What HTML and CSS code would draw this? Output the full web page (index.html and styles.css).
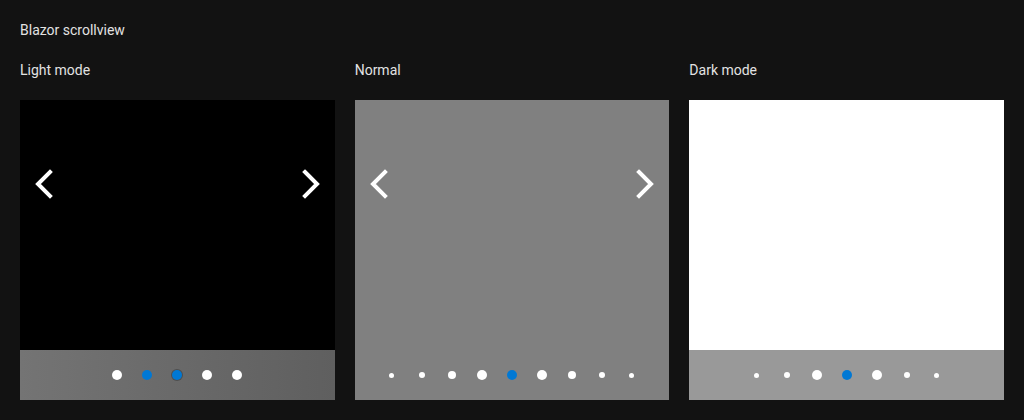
FILE: index.html
```html
<!DOCTYPE html>
<html>
<head>
<meta charset="utf-8">
<link rel="stylesheet" href="styles.css">
</head>
<body>
<div class="page">
  <div class="title">Blazor scrollview</div>
  <div class="columns">
    <section class="col">
      <div class="label">Light mode</div>
      <div class="view view-light">
        <div class="content">
          <svg class="arrow arrow-left" viewBox="0 0 20 32" width="20" height="32"><path d="M16 4 L4 16 L16 28"/></svg>
          <svg class="arrow arrow-right" viewBox="0 0 20 32" width="20" height="32"><path d="M4 4 L16 16 L4 28"/></svg>
        </div>
        <div class="footer">
          <span class="cell"><i class="dot d10"></i></span>
          <span class="cell"><i class="dot d10 blue"></i></span>
          <span class="cell"><i class="dot d10 blue ring"></i></span>
          <span class="cell"><i class="dot d10"></i></span>
          <span class="cell"><i class="dot d10"></i></span>
        </div>
      </div>
    </section>
    <section class="col">
      <div class="label">Normal</div>
      <div class="view view-normal">
        <div class="content">
          <svg class="arrow arrow-left" viewBox="0 0 20 32" width="20" height="32"><path d="M16 4 L4 16 L16 28"/></svg>
          <svg class="arrow arrow-right" viewBox="0 0 20 32" width="20" height="32"><path d="M4 4 L16 16 L4 28"/></svg>
        </div>
        <div class="footer">
          <span class="cell"><i class="dot d5"></i></span>
          <span class="cell"><i class="dot d6"></i></span>
          <span class="cell"><i class="dot d8"></i></span>
          <span class="cell"><i class="dot d10"></i></span>
          <span class="cell"><i class="dot d10 blue"></i></span>
          <span class="cell"><i class="dot d10"></i></span>
          <span class="cell"><i class="dot d8"></i></span>
          <span class="cell"><i class="dot d6"></i></span>
          <span class="cell"><i class="dot d5"></i></span>
        </div>
      </div>
    </section>
    <section class="col">
      <div class="label">Dark mode</div>
      <div class="view view-dark">
        <div class="content"></div>
        <div class="footer">
          <span class="cell"><i class="dot d5"></i></span>
          <span class="cell"><i class="dot d6"></i></span>
          <span class="cell"><i class="dot d10"></i></span>
          <span class="cell"><i class="dot d10 blue"></i></span>
          <span class="cell"><i class="dot d10"></i></span>
          <span class="cell"><i class="dot d6"></i></span>
          <span class="cell"><i class="dot d5"></i></span>
        </div>
      </div>
    </section>
  </div>
</div>
</body>
</html>
```
FILE: styles.css
```css
html, body {
  margin: 0;
  padding: 0;
  background: #121212;
}
body {
  font-family: Roboto, "Liberation Sans", sans-serif;
  font-size: 14px;
  color: #e2e2e2;
}
.page {
  padding: 20px;
}
.title {
  line-height: 20px;
  height: 20px;
  margin-bottom: 20px;
}
.columns {
  display: grid;
  grid-template-columns: 1fr 1fr 1fr;
  column-gap: 20px;
}
.label {
  line-height: 20px;
  height: 20px;
  margin-bottom: 20px;
}
.view {
  height: 300px;
  display: flex;
  flex-direction: column;
}
.content {
  position: relative;
  height: 250px;
}
.footer {
  height: 50px;
  display: flex;
  justify-content: center;
  align-items: center;
}
.view-light .content { background: #000; }
.view-light .footer { background: linear-gradient(to right, #747474, #5f5f5f); }
.view-normal .content { background: #808080; }
.view-normal .footer { background: #808080; }
.view-dark .content { background: #ffffff; }
.view-dark .footer { background: #999999; }
.arrow {
  position: absolute;
  top: 68px;
  fill: none;
  stroke: #ffffff;
  stroke-width: 4;
  stroke-linecap: square;
  stroke-linejoin: miter;
}
.arrow-left { left: 14px; }
.arrow-right { right: 14px; }
.cell {
  width: 30px;
  height: 10px;
  display: flex;
  justify-content: center;
  align-items: center;
}
.dot {
  display: block;
  border-radius: 50%;
  background: #ffffff;
}
.d5 { width: 5px; height: 5px; }
.d6 { width: 6px; height: 6px; }
.d8 { width: 8px; height: 8px; }
.d10 { width: 10px; height: 10px; }
.blue { background: #0078d4; }
.ring { box-shadow: 0 0 0 1px #4f4f4f; }
```
